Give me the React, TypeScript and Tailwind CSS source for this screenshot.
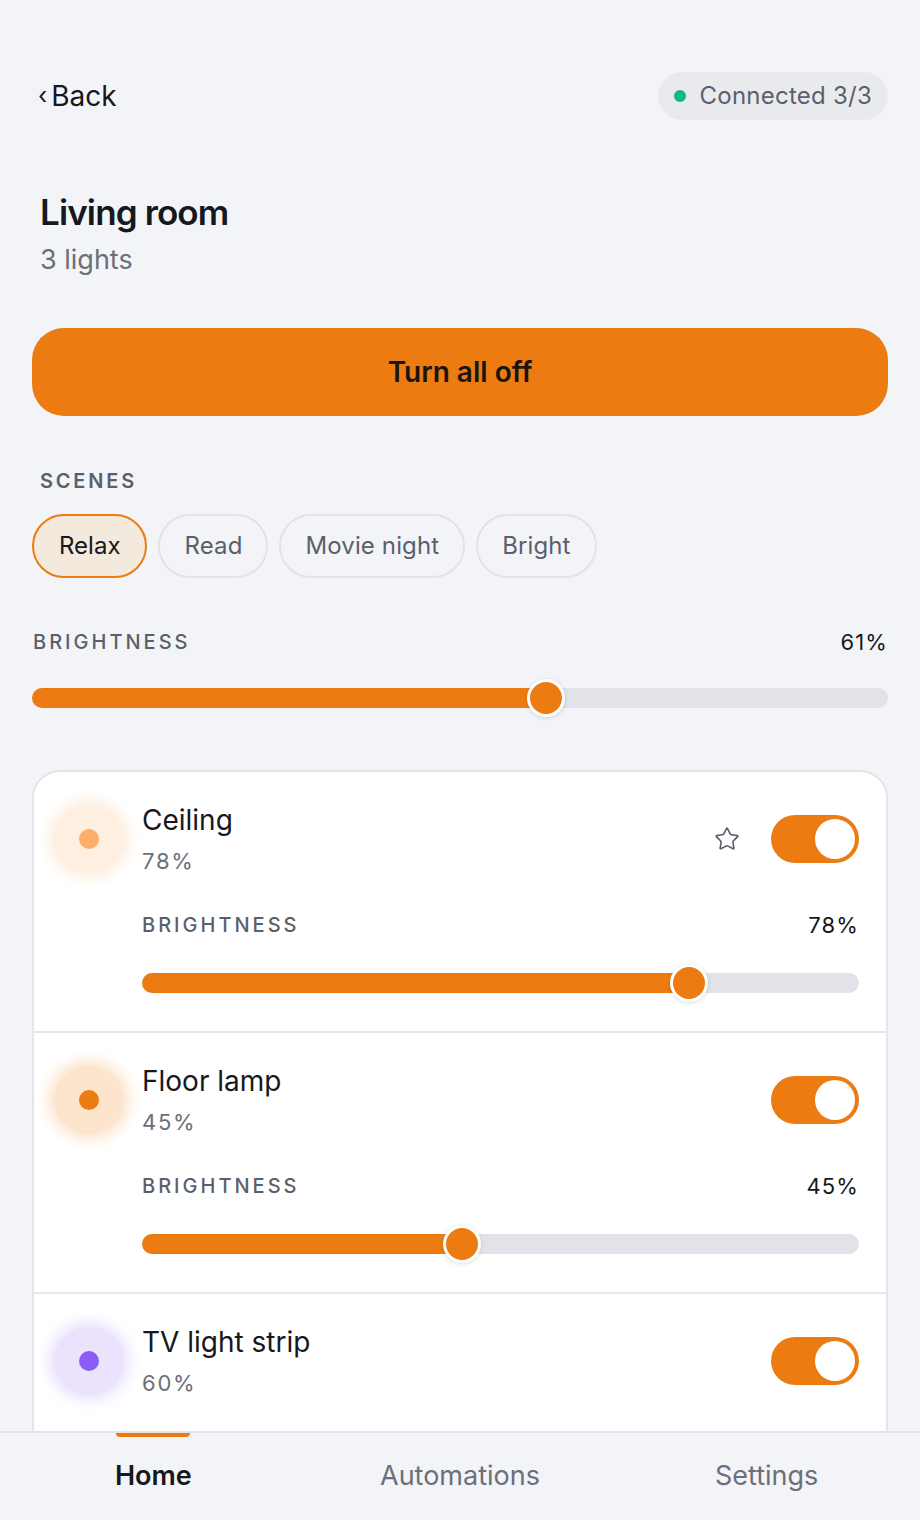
import React from 'react'
import { Star } from 'lucide-react'

type Light = {
  name: string
  level: number
  dot: string
  halo: string
  starred?: boolean
  expanded?: boolean
}

const lights: Light[] = [
  { name: 'Ceiling', level: 78, dot: 'bg-[#fdae6b]', halo: 'bg-[#feefe1] shadow-[0_0_14px_6px_#feefe1]', starred: true, expanded: true },
  { name: 'Floor lamp', level: 45, dot: 'bg-[#ec7c11]', halo: 'bg-[#fde4cd] shadow-[0_0_14px_6px_#fde4cd]', expanded: true },
  { name: 'TV light strip', level: 60, dot: 'bg-[#8b5cf6]', halo: 'bg-[#ebe3fe] shadow-[0_0_14px_6px_#ebe3fe]' },
]

const scenes = ['Relax', 'Read', 'Movie night', 'Bright']

const Slider = ({ value }: { value: number }) => {
  const p = value / 100
  const centre = `calc(${value}% - ${29 * p}px + 10px)`
  return (
    <div className="relative h-[20px] rounded-full bg-[#e2e3e8]">
      <div className="absolute left-0 top-0 h-full rounded-full bg-[#ec7c11]" style={{ width: centre }} />
      <div
        className="absolute top-1/2 h-[38px] w-[38px] -translate-x-1/2 -translate-y-1/2 rounded-full border-[3px] border-white bg-[#ec7c11] shadow-[0_1px_4px_rgba(0,0,0,0.15)]"
        style={{ left: centre }}
      />
    </div>
  )
}

const Toggle = () => (
  <div className="flex h-[48px] w-[88px] items-center justify-end rounded-full bg-[#ec7c11] pr-[4px]">
    <div className="h-[40px] w-[40px] rounded-full bg-white" />
  </div>
)

const LightRow = ({ light, first }: { light: Light; first?: boolean }) => (
  <div
    className={
      (first ? '' : 'border-t-2 border-[#e6e7eb] ') +
      (light.expanded ? 'pl-[20px] pr-[27px] pt-[30px] pb-[38px]' : 'pl-[20px] pr-[27px] pt-[30px] pb-[80px]')
    }
  >
    <div className="flex items-center">
      <div className={`flex h-[68px] w-[70px] items-center justify-center rounded-full ${light.halo}`}>
        <div className={`h-[20px] w-[20px] rounded-full ${light.dot}`} />
      </div>
      <div className="ml-[18px] flex-1">
        <div className="text-[28px] leading-[36px] text-[#16181d]">{light.name}</div>
        <div className="mt-[8px] text-[22px] leading-[30px] tracking-[0.08em] text-[#6b6f7a]">{light.level}%</div>
      </div>
      {light.starred && <Star className="mr-[31px] h-[26px] w-[26px] text-[#5b5f6b]" strokeWidth={1.5} />}
      <Toggle />
    </div>
    {light.expanded && (
      <div className="ml-[88px]">
        <div className="mt-[37px] flex items-center justify-between text-[20px] leading-[24px]">
          <span className="font-medium tracking-[0.15em] text-[#5b5f6b]">BRIGHTNESS</span>
          <span className="text-[22px] tracking-[0.05em] text-[#16181d]">{light.level}%</span>
        </div>
        <div className="mt-[36px]">
          <Slider value={light.level} />
        </div>
      </div>
    )}
  </div>
)

export default function App() {
  return (
    <div className="flex h-[1520px] w-[920px] flex-col overflow-hidden bg-[#f3f4f8] font-['Inter',sans-serif]">
      <main className="min-h-0 flex-1 overflow-hidden px-[32px] pt-[72px]">
        <div className="flex h-[48px] items-center justify-between">
          <button className="flex items-center gap-[4px] pl-[6px] text-[28px] text-[#16181d]">
            <span className="text-[24px]">‹</span>
            <span>Back</span>
          </button>
          <div className="flex h-[48px] items-center gap-[14px] rounded-full bg-[#e9eaee] px-[16px]">
            <span className="h-[12px] w-[12px] rounded-full bg-[#10b981]" />
            <span className="text-[24px] tracking-[0.01em] text-[#5b5f6b]">Connected 3/3</span>
          </div>
        </div>

        <div className="pl-[8px]">
          <h1 className="mt-[72px] text-[35px] font-semibold leading-[40px] tracking-tight text-[#16181d]">Living room</h1>
          <p className="mt-[10px] text-[27px] leading-[36px] text-[#6b6f7a]">3 lights</p>
        </div>

        <button className="mt-[50px] flex h-[88px] w-full items-center justify-center rounded-[32px] bg-[#ec7c11] text-[28px] font-semibold text-[#1a1410]">
          Turn all off
        </button>

        <div className="mt-[53px] pl-[8px] text-[20px] font-semibold leading-[24px] tracking-[0.14em] text-[#5b5f6b]">SCENES</div>
        <div className="mt-[21px] flex gap-[11px]">
          {scenes.map((s, i) => (
            <div
              key={s}
              className={
                i === 0
                  ? 'flex h-[64px] items-center rounded-full border-2 border-[#ec7c11] bg-[#f4e9dd] px-[25px] text-[24px] text-[#16181d]'
                  : 'flex h-[64px] items-center rounded-full border-2 border-[#e2e3e8] px-[24px] text-[24px] tracking-[0.005em] text-[#5b5f6b]'
              }
            >
              {s}
            </div>
          ))}
        </div>

        <div className="mt-[52px] flex items-center justify-between text-[20px] leading-[24px]">
          <span className="pl-[1px] font-medium tracking-[0.15em] text-[#5b5f6b]">BRIGHTNESS</span>
          <span className="text-[22px] tracking-[0.05em] text-[#16181d]">61%</span>
        </div>
        <div className="mt-[34px]">
          <Slider value={61} />
        </div>

        <div className="mt-[62px] rounded-[28px] border-2 border-[#e4e5ea] bg-white">
          {lights.map((l, i) => (
            <LightRow key={l.name} light={l} first={i === 0} />
          ))}
        </div>
      </main>

      <nav className="grid h-[89px] shrink-0 grid-cols-3 border-t-2 border-[#e2e3e8] bg-[#f3f4f8]">
        <div className="relative flex items-center justify-center">
          <span className="absolute top-0 left-1/2 h-[4px] w-[74px] -translate-x-1/2 rounded-b-full bg-[#ec7c11]" />
          <span className="text-[27px] font-semibold text-[#16181d]">Home</span>
        </div>
        <div className="flex items-center justify-center text-[27px] text-[#6b6f7a]">Automations</div>
        <div className="flex items-center justify-center text-[27px] text-[#6b6f7a]">Settings</div>
      </nav>
    </div>
  )
}
